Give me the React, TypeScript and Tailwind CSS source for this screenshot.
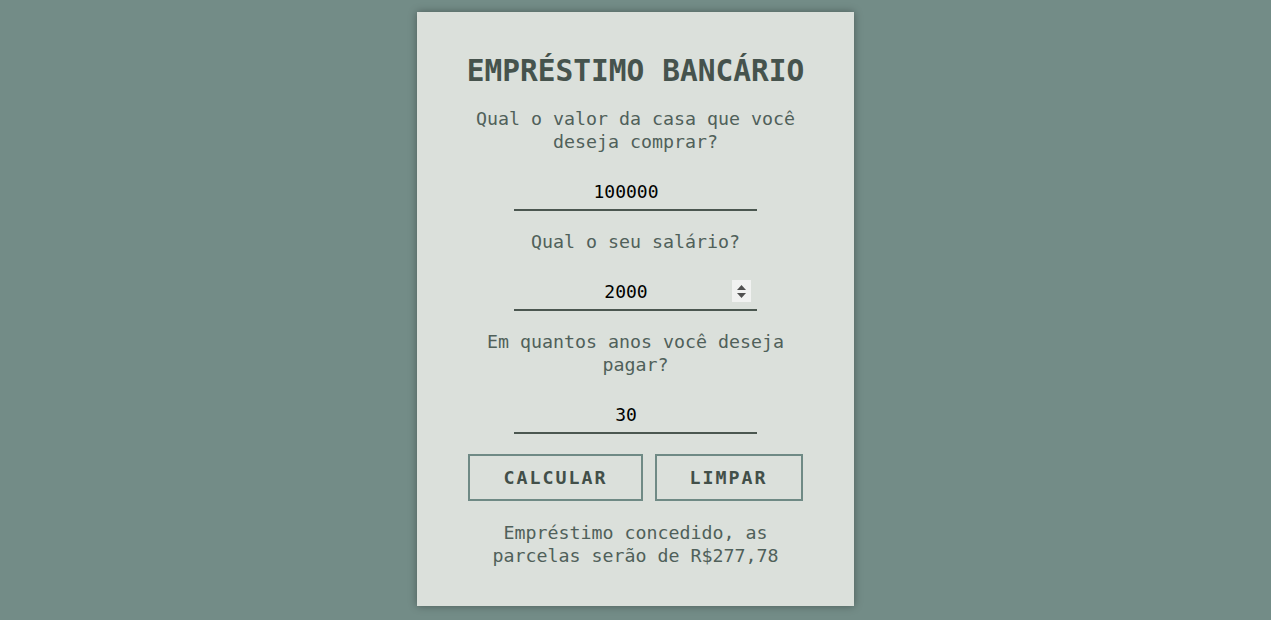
import { useState } from "react";

const mono = "font-['DejaVu_Sans_Mono','Liberation_Mono',monospace]";

function Field({
  value,
  onChange,
  spinner,
}: {
  value: string;
  onChange: (v: string) => void;
  spinner?: boolean;
}) {
  return (
    <div className="relative w-[243px]">
      <input
        type="text"
        value={value}
        onChange={(e) => onChange(e.target.value)}
        className={`${mono} w-full h-[38px] pr-[19px] bg-transparent border-b-2 border-[#4b5750] text-center text-[18px] text-black outline-none`}
      />
      {spinner && (
        <div className="absolute right-[6px] top-[7px] w-[19px] h-[22px] bg-[#f1f2f1] flex flex-col items-center justify-center gap-[3px]">
          <svg width="9" height="5" viewBox="0 0 9 5">
            <path d="M0 5 L4.5 0 L9 5 Z" fill="#505050" />
          </svg>
          <svg width="9" height="5" viewBox="0 0 9 5">
            <path d="M0 0 L4.5 5 L9 0 Z" fill="#505050" />
          </svg>
        </div>
      )}
    </div>
  );
}

export default function App() {
  const [casa, setCasa] = useState("100000");
  const [salario, setSalario] = useState("2000");
  const [anos, setAnos] = useState("30");

  const label = "text-[18.3px] leading-[23px] text-[#50605a] text-center";

  return (
    <div className={`${mono} min-h-[620px] bg-[#738c87] pt-3`}>
      <div className="mx-auto w-[437px] h-[594px] bg-[#dbe0db] shadow-[0_0_8px_rgba(0,0,0,0.35)] flex flex-col items-center pt-[41px]">
        <h1 className="text-[29.5px] leading-[36px] font-bold text-[#46534d]">
          EMPRÉSTIMO BANCÁRIO
        </h1>
        <p className={`${label} mt-[18px] w-[330px]`}>
          Qual o valor da casa que você deseja comprar?
        </p>
        <div className="mt-[20px]">
          <Field value={casa} onChange={setCasa} />
        </div>
        <p className={`${label} mt-[19px]`}>Qual o seu salário?</p>
        <div className="mt-[20px]">
          <Field value={salario} onChange={setSalario} spinner />
        </div>
        <p className={`${label} mt-[19px] w-[310px]`}>
          Em quantos anos você deseja pagar?
        </p>
        <div className="mt-[20px]">
          <Field value={anos} onChange={setAnos} />
        </div>
        <div className="mt-[20px] flex gap-3">
          <button className="border-2 border-[#6f8a85] px-[33px] py-[10px] text-[18.3px] leading-[23px] font-bold tracking-[2px] text-[#424f49]">
            CALCULAR
          </button>
          <button className="border-2 border-[#6f8a85] px-[33px] py-[10px] text-[18.3px] leading-[23px] font-bold tracking-[2px] text-[#424f49]">
            LIMPAR
          </button>
        </div>
        <p className={`${label} mt-[20px] w-[300px]`}>
          Empréstimo concedido, as parcelas serão de R$277,78
        </p>
      </div>
    </div>
  );
}
